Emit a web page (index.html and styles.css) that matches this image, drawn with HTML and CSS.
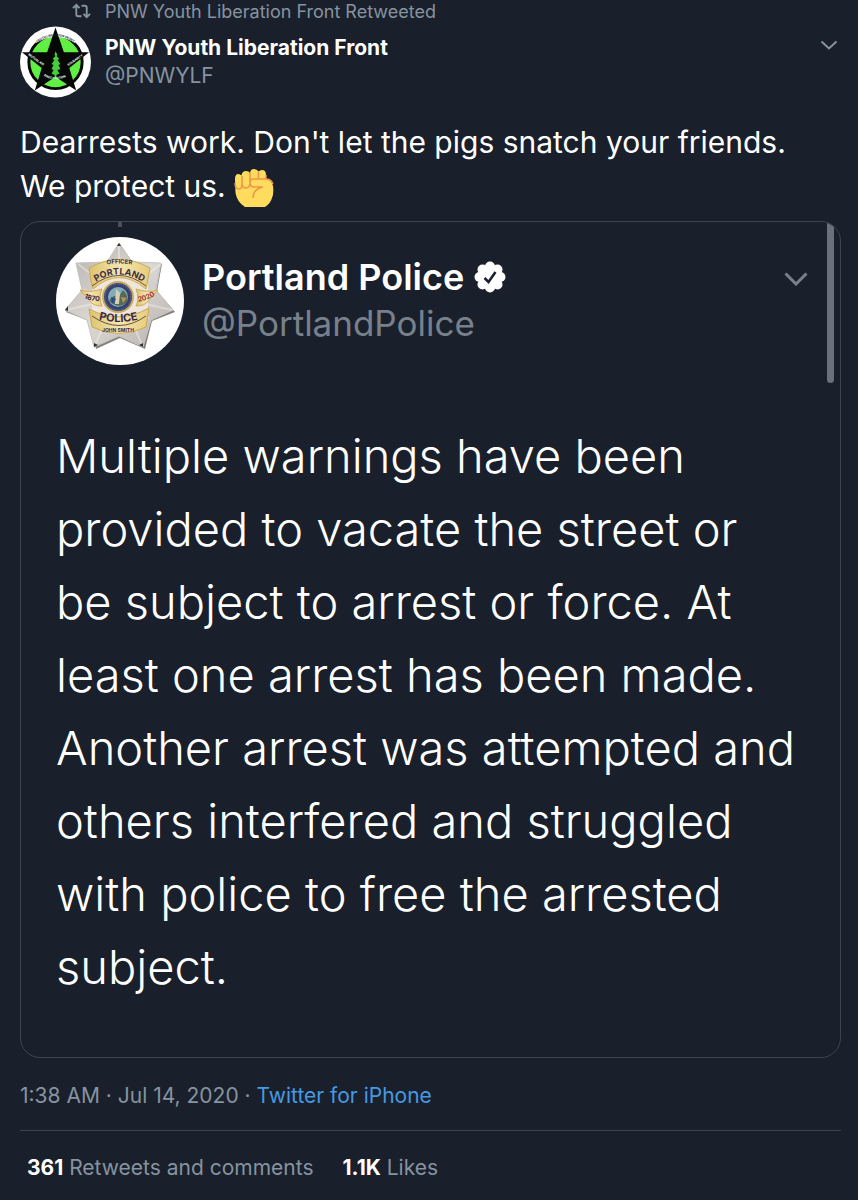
FILE: index.html
```html
<!DOCTYPE html>
<html lang="en">
<head>
    <meta charset="UTF-8">
    <meta name="viewport" content="width=device-width, initial-scale=1.0">
    <title>PNW Youth Liberation Front</title>
    <link rel="stylesheet" href="styles.css">
</head>
<body>

    <article class="tweet">
        <div class="context">
            <svg class="context-icon" viewBox="0 0 20 16" aria-hidden="true">
                <path d="M1 5l3.500-3.500L8 5M4.500 2v9.500q0 2 2 2H10M12 11l3.500 3.500L19 11M15.500 14V4.500q0-2-2-2H10"/>
            </svg>
            <span>PNW Youth Liberation Front Retweeted</span>
        </div>

        <header class="author">
            <svg class="avatar" viewBox="0 0 72 72" role="img" aria-label="PNW Youth Liberation Front">
                <circle cx="36" cy="36" r="36" fill="#fff"/>
                <circle cx="36" cy="36" r="27" fill="#62ef45" stroke="#050805" stroke-width="3"/>
                <path d="M15 15Q36 2 57 15" fill="none" stroke="#fff" stroke-width="4"/>
                <path d="M36 1l8.500 25H70L50 42l7 23-21-14-21 14 7-23L2 26h25.500z" fill="#050805"/>
                <path d="M36 25l2 4-1 1 3 3-2 1 3 4-2 1 2 4-3 1 2 4-3 1v5h-2v-5l-3-1 2-4-2-1 2-4-2-1 3-4-2-1 3-3-1-1z" fill="#45cf3b"/>
                <path id="arc-top" d="M17 16.500Q36 3 55 16.500" fill="none"/>
                <path id="arc-left" d="M8 29L24 40" fill="none"/>
                <path id="arc-right" d="M49 40L65 29" fill="none"/>
                <path id="arc-low" d="M24 50Q36 57 49 50" fill="none"/>
                <g class="avatar-text">
                    <text fill="#222"><textPath href="#arc-top">YOUTH LIBERATION FRONT</textPath></text>
                    <text fill="#fff"><textPath href="#arc-left">MUTUAL AID</textPath></text>
                    <text fill="#fff"><textPath href="#arc-right">SOLIDARITY</textPath></text>
                    <text fill="#fff"><textPath href="#arc-low">DIRECT ACTION</textPath></text>
                </g>
            </svg>
            <div class="author-names">
                <strong class="author-name">PNW Youth Liberation Front</strong>
                <span class="author-handle">@PNWYLF</span>
            </div>
            <button class="more" type="button" aria-label="More">
                <svg class="more-icon" viewBox="0 0 18 10" aria-hidden="true"><path d="M1.500 1.500L9 8.500l7.500-7"/></svg>
            </button>
        </header>

        <p class="tweet-text">
            Dearrests work. Don't let the pigs snatch your friends.<br>
            We protect us.
            <svg class="fist" viewBox="0 0 40 40" role="img" aria-label="raised fist">
                <path d="M1 10Q1 5 4.500 5 6 5 7.500 6.500 8 2 12 2q3 0 4 2Q16.500 0 20 0q3 0 4.500 2.500Q26 1 28 1q4 0 4 5v4q6 1 7 7 1 7-1 12-2 6-7 9H11Q3 33 1.500 24z" fill="#ffdc5d"/>
                <path d="M1 14q0 6 4 6 3 0 3-5V7M8 14q0 5 4 5 3.500 0 4-5V4M16 13q0 4 2 4M24.500 3v6M32 6v4M18 10h14q5 0 7 5M18 10q-2 1-2 4 0 4 4 4h9q-10 2-10 11" fill="none" stroke="#ee9547" stroke-width="1.500"/>
            </svg>
        </p>

        <section class="card">
            <span class="card-nub"></span>
            <span class="card-scroll"></span>
            <header class="card-header">
                <svg class="card-avatar" viewBox="0 0 128 128" role="img" aria-label="Portland Police badge">
                    <defs>
                        <linearGradient id="silver" x1="0" y1="0" x2="1" y2="1">
                            <stop offset="0" stop-color="#b3aea9"/>
                            <stop offset=".5" stop-color="#dcd8d4"/>
                            <stop offset="1" stop-color="#b5b0ab"/>
                        </linearGradient>
                        <linearGradient id="gold" x1="0" y1="0" x2="1" y2="0">
                            <stop offset="0" stop-color="#dcc36c"/>
                            <stop offset=".5" stop-color="#f3e6af"/>
                            <stop offset="1" stop-color="#e6cd7c"/>
                        </linearGradient>
                    </defs>
                    <circle cx="64" cy="64" r="64" fill="#fff"/>
                    <path d="M64 7L77 26 106 27 101 54 119 75 96 84 89 112 64 101 40 112 33 84 10 75 28 54 21 27 52 26z" fill="#85817d"/>
                    <path d="M63 6L76 25 105 26 100 53 117 73 95 83 87 110 63 99 38 110 31 83 9 73 26 53 20 26 51 25z" fill="url(#silver)" stroke="#c8c4bf"/>
                    <path d="M63 8v89M22 27l71 55M105 27L33 82M10 73l89-20M116 73L27 53M39 108L76 25M86 108L51 25" stroke="#f0eeec" opacity=".5" stroke-width="2"/>
                    <path d="M63 6l2 3h-4zM9 73l3-4v5zM38 110v-4l4 2zM87 110l-4-2 4-2z" fill="#34302f"/>
                    <path d="M36 46Q63 29 92 46V74Q63 86 36 74z" fill="#eee5db"/>
                    <g fill="url(#gold)" stroke="#cba954">
                        <path d="M33 31Q63 14 94 31l-4 21Q63 29 37 52l-2-8z"/>
                        <path d="M24 53q11 3 22-1-4 9 0 17-9 0-12-5z"/>
                        <path d="M102 53q-11 3-22-1 4 9 0 17 9 0 12-5z"/>
                        <path d="M33 72q30 16 60-1l-3 19Q63 103 36 90z"/>
                    </g>
                    <path d="M36 49Q63 28 90 49M36 79Q63 98 90 79" fill="none" stroke="#675044"/>
                    <circle cx="62" cy="60" r="16" fill="#c8ad60"/>
                    <circle cx="62" cy="60" r="14" fill="#36406f"/>
                    <circle cx="62" cy="60" r="13" fill="none" stroke="#7f81a0" stroke-dasharray="1 1"/>
                    <circle cx="62" cy="60" r="10" fill="#82adb8"/>
                    <path d="M53 64q5-8 9-3l5-8q6 6 4 12-8 8-18-1z" fill="#536b56"/>
                    <path d="M60 52l4 4-1 11h-4z" fill="#d7d0b6"/>
                    <path d="M55 60l5 2-4 5z" fill="#284d8b"/>
                    <path d="M65 60l6 1-4 5z" fill="#b99058"/>
                    <path id="badge-officer" d="M36 31Q63 22 91 31" fill="none"/>
                    <path id="badge-city" d="M34 49Q63 26 93 49" fill="none"/>
                    <path id="badge-police" d="M32 79Q62 91 93 79" fill="none"/>
                    <path id="badge-since" d="M26 60Q35 65 46 64" fill="none"/>
                    <path id="badge-year" d="M80 65Q91 64 101 57" fill="none"/>
                    <g class="badge-text" fill="#3d2a4b">
                        <text font-size="6"><textPath href="#badge-officer" startOffset="50%">OFFICER</textPath></text>
                        <text font-size="9"><textPath href="#badge-city" startOffset="50%">PORTLAND</textPath></text>
                        <text font-size="11"><textPath href="#badge-police" startOffset="50%">POLICE</textPath></text>
                        <text font-size="7"><textPath href="#badge-since" startOffset="50%">1870</textPath></text>
                        <text font-size="7" fill="#a1373a"><textPath href="#badge-year" startOffset="50%">2020</textPath></text>
                        <text x="62" y="95" font-size="5">JOHN SMITH</text>
                    </g>
                </svg>
                <div class="card-names">
                    <strong class="card-name">Portland Police
                        <svg class="verified" viewBox="0 0 32 32" role="img" aria-label="Verified account">
                            <g fill="#fff">
                                <circle cx="16" cy="16" r="12"/>
                                <circle cx="16" cy="5.500" r="5"/>
                                <circle cx="23.500" cy="8.500" r="5"/>
                                <circle cx="26.500" cy="16" r="5"/>
                                <circle cx="23.500" cy="23.500" r="5"/>
                                <circle cx="16" cy="26.500" r="5"/>
                                <circle cx="8.500" cy="23.500" r="5"/>
                                <circle cx="5.500" cy="16" r="5"/>
                                <circle cx="8.500" cy="8.500" r="5"/>
                            </g>
                            <path d="M10.500 17l4 4 7-10" fill="none" stroke="#19202b" stroke-width="2.500"/>
                        </svg>
                    </strong>
                    <span class="card-handle">@PortlandPolice</span>
                </div>
                <button class="card-more" type="button" aria-label="More">
                    <svg class="card-more-icon" viewBox="0 0 24 14" aria-hidden="true"><path d="M1.500 1.500L12 12 22.500 1.500"/></svg>
                </button>
            </header>
            <p class="card-text">
                Multiple warnings have been<br>
                provided to vacate the street or<br>
                be subject to arrest or force. At<br>
                least one arrest has been made.<br>
                Another arrest was attempted and<br>
                others interfered and struggled<br>
                with police to free the arrested<br>
                subject.
            </p>
        </section>

        <div class="meta">
            <time datetime="2020-07-14T01:38">1:38 AM · Jul 14, 2020</time> · <a href="#">Twitter for iPhone</a>
        </div>

        <footer class="stats">
            <a href="#"><strong>361</strong> Retweets and comments</a>
            <a href="#"><strong>1.1K</strong> Likes</a>
        </footer>
    </article>

</body>
</html>
```
FILE: styles.css
```css
body {
    margin: 0;
    background-color: #19202b;
    color: #fff;
    font-family: Inter, "Liberation Sans", sans-serif;
}
a {
    color: inherit;
    text-decoration: none;
}
button {
    padding: 0;
    border: 0;
    background: none;
    cursor: pointer;
}
svg {
    display: block;
}
.tweet {
    padding: 0 17px 0 20px;
}
.context {
    display: flex;
    align-items: center;
    gap: 14px;
    padding-left: 52px;
    height: 22px;
    color: #8693a0;
    font-size: 18px;
}
.context-icon {
    width: 19px;
    height: 16px;
    fill: none;
    stroke: #8693a0;
    stroke-width: 2;
}
.author {
    display: flex;
    gap: 14px;
    padding-top: 4px;
}
.avatar {
    width: 71px;
    height: 72px;
}
.avatar-text {
    font-size: 3px;
    font-weight: 700;
}
.author-names {
    display: flex;
    flex: 1;
    flex-direction: column;
    padding-top: 8px;
    font-size: 21px;
    line-height: 28px;
}
.author-name {
    font-weight: 700;
}
.author-handle {
    color: #8693a0;
}
.more {
    align-self: flex-start;
    margin-top: 14px;
    margin-right: 3px;
}
.more-icon {
    width: 18px;
    height: 10px;
    fill: none;
    stroke: #8693a0;
    stroke-width: 2;
}
.tweet-text {
    margin: 22px 0 13px;
    font-size: 30px;
    line-height: 44px;
}
.fist {
    display: inline-block;
    width: 40px;
    height: 40px;
    margin: -4px 0;
    vertical-align: -8px;
}
.card {
    position: relative;
    overflow: hidden;
    padding: 15px 32px 54px 35px;
    border: 1px solid #3b444f;
    border-radius: 20px;
}
.card-nub {
    position: absolute;
    top: 0;
    left: 97px;
    width: 4px;
    height: 5px;
    background-color: #46505b;
}
.card-scroll {
    position: absolute;
    top: 0;
    right: 6px;
    width: 7px;
    height: 161px;
    border-radius: 0 0 4px 4px;
    background-color: #69717c;
}
.card-header {
    display: flex;
    gap: 18px;
}
.card-avatar {
    width: 128px;
    height: 128px;
}
.card-names {
    display: flex;
    flex: 1;
    flex-direction: column;
    padding-top: 17px;
    font-size: 35px;
    line-height: 46px;
}
.card-name {
    display: flex;
    align-items: center;
    gap: 10px;
    font-size: 36px;
    font-weight: 600;
}
.verified {
    width: 32px;
    height: 32px;
}
.card-handle {
    color: #78818b;
}
.card-more {
    align-self: flex-start;
    margin-top: 35px;
}
.card-more-icon {
    width: 24px;
    height: 14px;
    fill: none;
    stroke: #78818b;
    stroke-width: 3;
}
.card-text {
    margin: 54px 0 0;
    font-size: 47px;
    font-weight: 300;
    line-height: 73px;
    white-space: nowrap;
}
.meta {
    padding: 24px 0 20px;
    border-bottom: 1px solid #3b444f;
    color: #8693a0;
    font-size: 21px;
    line-height: 28px;
}
.meta a {
    color: #4699e0;
}
.stats {
    display: flex;
    gap: 29px;
    padding: 23px 7px 18px;
    color: #8693a0;
    font-size: 21px;
    line-height: 28px;
}
.stats strong {
    color: #fff;
}
.badge-text {
    font-weight: 700;
    text-anchor: middle;
}
```
